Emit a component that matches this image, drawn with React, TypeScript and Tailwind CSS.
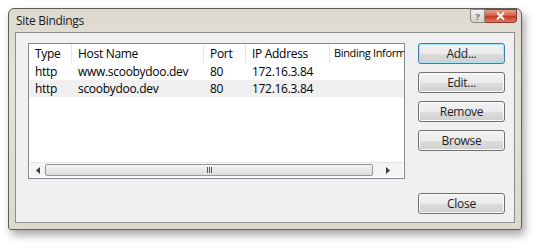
import React from "react"

// ── Data ───────────────────────────────────────────────────

const columns = [
  { label: "Type", width: "w-[43px]" },
  { label: "Host Name", width: "w-[132px]" },
  { label: "Port", width: "w-[42px]" },
  { label: "IP Address", width: "w-[84px]" },
]

const bindings = [
  { type: "http", host: "www.scoobydoo.dev", port: "80", ip: "172.16.3.84" },
  { type: "http", host: "scoobydoo.dev", port: "80", ip: "172.16.3.84" },
]

// ── Win7 push button ───────────────────────────────────────

function PushButton({ label, isDefault = false }: { label: string; isDefault?: boolean }) {
  return (
    <button
      type="button"
      className={`relative flex h-[21px] w-[87px] items-center justify-center rounded-[3px] border text-[12px] text-[#1e1e1e] ${
        isDefault
          ? "border-[#3c7fb1] shadow-[inset_0_0_0_1px_#a8e4f7]"
          : "border-[#707070] shadow-[inset_0_0_0_1px_#fbfbfb]"
      } bg-[linear-gradient(to_bottom,#f2f2f2_0%,#ebebeb_50%,#dddddd_51%,#cfcfcf_100%)]`}
    >
      {label}
    </button>
  )
}

// ── Bindings list view ─────────────────────────────────────

function BindingsList() {
  return (
    <div className="flex h-[136px] w-[377px] flex-col overflow-hidden border border-[#828790] bg-white">
      <div className="flex h-[19px] shrink-0 items-stretch">
        {columns.map((col) => (
          <div
            key={col.label}
            className={`flex ${col.width} shrink-0 items-center whitespace-nowrap border-r border-[#e5e5e5] pl-[6px]`}
          >
            {col.label}
          </div>
        ))}
        <div className="flex min-w-0 flex-1 items-center whitespace-nowrap pl-[4px] text-[11px] tracking-[-0.35px]">
          Binding Inform
        </div>
      </div>
      <div className="flex flex-1 flex-col">
        {bindings.map((b, i) => (
          <div
            key={b.host}
            className={`flex h-[17px] items-center ${i === 1 ? "bg-[#f0f0f0]" : ""}`}
          >
            <div className="w-[43px] shrink-0 pl-[6px]">{b.type}</div>
            <div className="w-[132px] shrink-0 pl-[6px]">{b.host}</div>
            <div className="w-[42px] shrink-0 pl-[6px]">{b.port}</div>
            <div className="w-[84px] shrink-0 pl-[6px]">{b.ip}</div>
          </div>
        ))}
      </div>
      {/* horizontal scrollbar */}
      <div className="mx-px mb-px flex h-[15px] shrink-0 items-stretch border-t border-[#e6e6e6] bg-[#f4f4f4]">
        <div className="flex w-[15px] items-center justify-center">
          <svg width="4" height="7" viewBox="0 0 4 7">
            <path d="M4 0 L0 3.5 L4 7 Z" fill="#3b3b3b" />
          </svg>
        </div>
        <div className="my-[1px] flex w-[328px] items-center justify-center rounded-[2px] border border-[#979797] bg-[linear-gradient(to_bottom,#f3f3f3,#dcdcdc)]">
          <span className="flex gap-[1px]">
            <span className="h-[6px] w-px bg-[#5a5a5a]" />
            <span className="h-[6px] w-px bg-[#5a5a5a]" />
            <span className="h-[6px] w-px bg-[#5a5a5a]" />
          </span>
        </div>
        <div className="flex flex-1 items-center justify-center">
          <svg width="4" height="7" viewBox="0 0 4 7">
            <path d="M0 0 L4 3.5 L0 7 Z" fill="#3b3b3b" />
          </svg>
        </div>
      </div>
    </div>
  )
}

// ── Title bar caption buttons ──────────────────────────────

function CaptionButtons() {
  return (
    <div className="flex h-[14px] self-start">
      <div className="flex w-[15px] items-center justify-center rounded-bl-[4px] border border-[#8a8a8a] bg-[linear-gradient(to_bottom,#f2f0ea,#d3d0c6)] text-[9px] font-bold leading-none text-[#6a6a6a]">
        ?
      </div>
      <div className="flex w-[32px] items-center justify-center rounded-br-[4px] border border-l-0 border-[#8a3a2c] bg-[linear-gradient(to_bottom,#eaa58f,#d3573f_50%,#c0381f_51%,#e07a5c)]">
        <svg width="9" height="8" viewBox="0 0 9 8">
          <path d="M1 0.5 L8 7.5 M8 0.5 L1 7.5" stroke="#ffffff" strokeWidth="2" />
        </svg>
      </div>
    </div>
  )
}

// ── Dialog ─────────────────────────────────────────────────

export default function App() {
  return (
    <div
      className="h-[249px] w-[540px] bg-white pl-[8px] pt-[8px] text-[12px] tracking-[-0.3px] text-black"
      style={{ fontFamily: '"Open Sans", "Noto Sans", sans-serif' }}
    >
      <div className="flex h-[222px] w-[514px] flex-col rounded-t-[6px] rounded-b-[3px] border border-[#5f5f5a] bg-[linear-gradient(to_bottom,#ddd9cf,#e6e3da_30%,#dcd9cf)] shadow-[3px_5px_9px_rgba(0,0,0,0.35)]">
        <div className="flex h-[23px] shrink-0 items-center justify-between pl-[7px] pr-[4px]">
          <span className="text-[#1a1a1a]">Site Bindings</span>
          <CaptionButtons />
        </div>
        <div className="mx-[6px] mb-[6px] flex flex-1 flex-col border border-[#8d8f8f] bg-[#f0f0f0] pl-[12px] pr-[9px] pt-[10px]">
          <div className="flex gap-[13px]">
            <BindingsList />
            <div className="flex flex-col gap-[8px]">
              <PushButton label="Add..." isDefault />
              <PushButton label="Edit..." />
              <PushButton label="Remove" />
              <PushButton label="Browse" />
            </div>
          </div>
          <div className="mt-[14px] flex justify-end">
            <PushButton label="Close" />
          </div>
        </div>
      </div>
    </div>
  )
}
